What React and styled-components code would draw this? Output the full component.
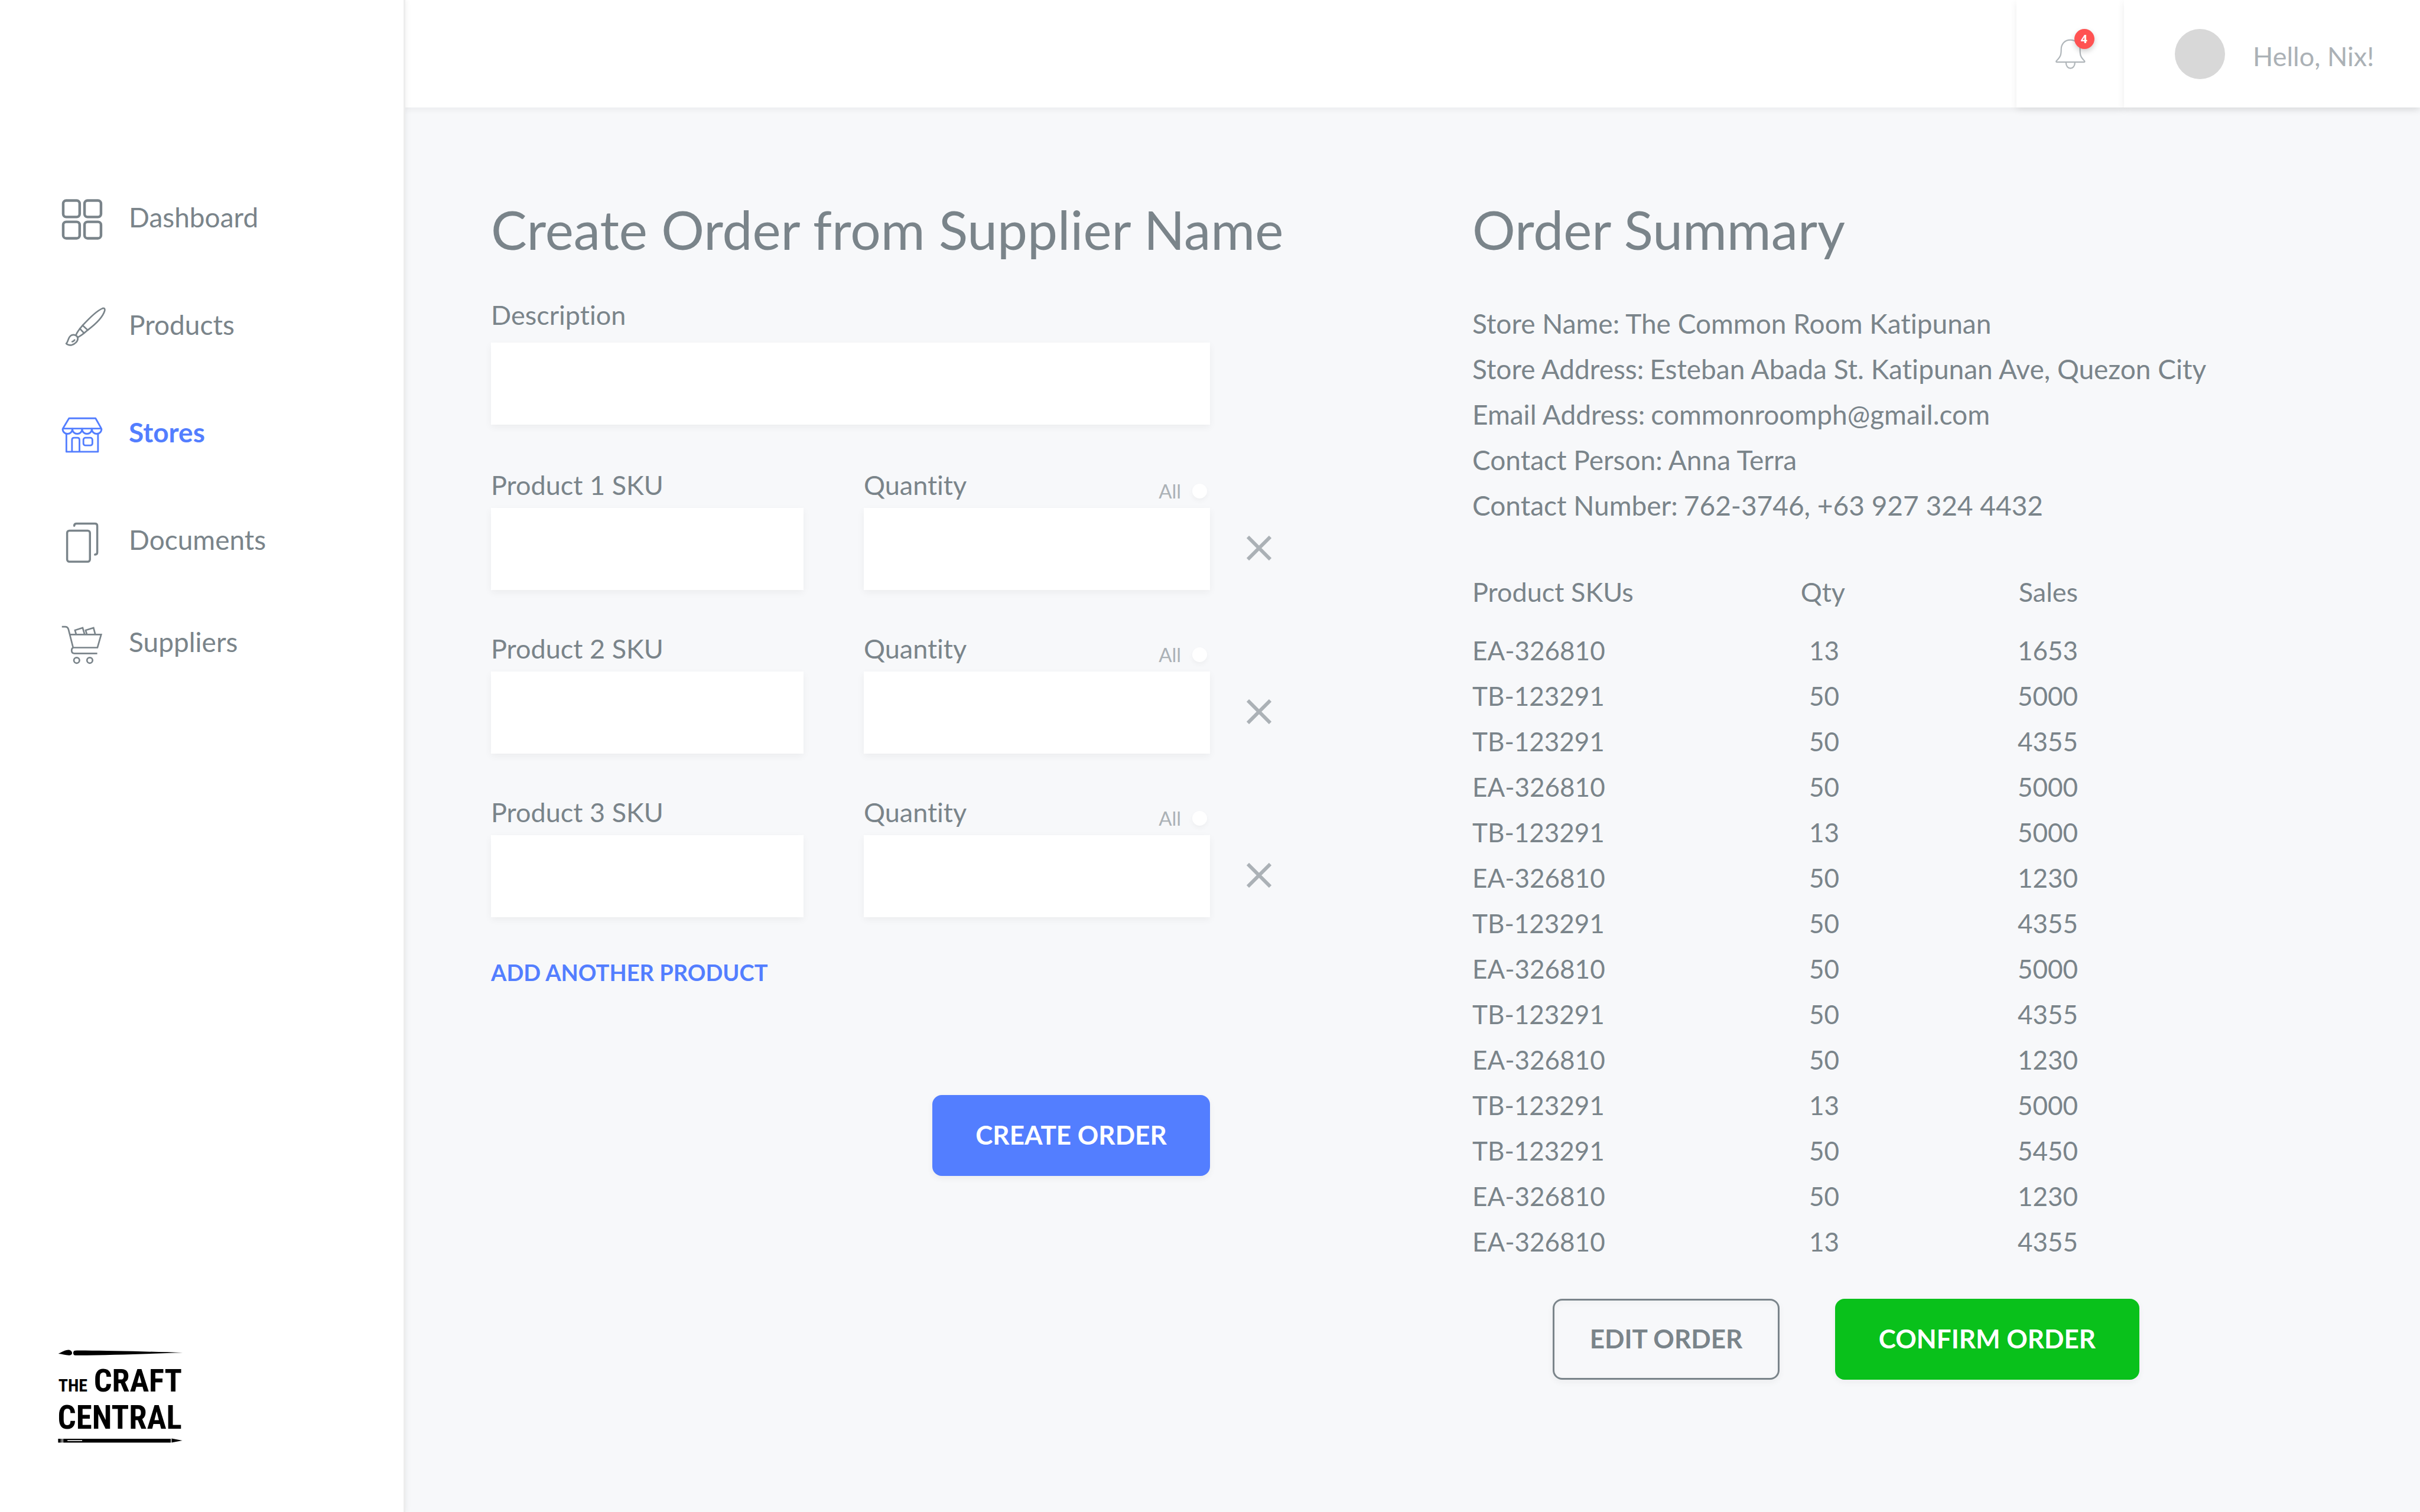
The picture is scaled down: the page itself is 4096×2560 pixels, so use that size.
import React, { useState } from "react";
import styled, { createGlobalStyle, css } from "styled-components";

const color = {
  text: "#7a848a",
  muted: "#abb1b6",
  blue: "#537eff",
  green: "#09c11b",
  red: "#ff5252",
  page: "#f7f8fa",
};

const GlobalStyle = createGlobalStyle`
  *, *::before, *::after { box-sizing: border-box; }
  body {
    margin: 0;
    background: ${color.page};
    color: ${color.text};
    font-family: Lato, "Open Sans", sans-serif;
    font-size: 45px;
    line-height: 54px;
    font-variant-ligatures: none;
  }
  button, input { font: inherit; color: inherit; }
`;

const Shell = styled.div`
  display: grid;
  grid-template-columns: 683px 1fr;
  min-height: 100vh;
`;

/* Sidebar */

const Sidebar = styled.aside`
  position: relative;
  z-index: 2;
  display: flex;
  flex-direction: column;
  justify-content: space-between;
  padding: 277px 0 109px;
  background: #fff;
  box-shadow: 3px 0 0 #ededed, 3px 0 10px rgba(0, 0, 0, 0.08);
`;

const NavList = styled.ul`
  margin: 0;
  padding: 0;
  list-style: none;
  font-size: 46px;
`;

const NavItem = styled.li`
  height: 182px;
  &:last-child {
    height: 164px;
  }
`;

const NavLink = styled.a`
  display: flex;
  align-items: center;
  gap: 42px;
  height: 100%;
  padding-left: 100px;
  color: ${(p) => (p.$active ? color.blue : color.text)};
  font-weight: ${(p) => (p.$active ? 700 : 400)};
  text-decoration: none;
`;

const NavGlyph = styled.svg`
  flex: none;
  width: 76px;
  height: 76px;
  overflow: visible;
  fill: none;
  stroke: currentColor;
  stroke-width: ${(p) => p.$stroke};
`;

const LogoLink = styled.a`
  display: block;
  width: 221px;
  margin-left: 93px;
  color: #000;
`;

const LogoArt = styled.svg`
  display: block;
  width: 221px;
  height: 171px;
  overflow: visible;
  fill: currentColor;
  font-family: "Liberation Sans Narrow", "Roboto Condensed", Roboto, sans-serif;
  font-weight: 700;
`;

/* Top bar */

const Content = styled.div`
  display: flex;
  flex-direction: column;
  min-width: 0;
`;

const TopBar = styled.header`
  display: flex;
  justify-content: flex-end;
  height: 182px;
  background: #fff;
  box-shadow: 0 4px 10px rgba(0, 0, 0, 0.05);
`;

const cell = css`
  display: flex;
  align-items: center;
  border: 0;
  background: #fff;
  box-shadow: 0 4px 12px rgba(0, 0, 0, 0.08);
`;

const BellButton = styled.button`
  ${cell}
  justify-content: center;
  width: 182px;
  padding: 0;
`;

const BellWrap = styled.span`
  position: relative;
  display: block;
  width: 51px;
  height: 51px;
`;

const BellArt = styled.svg`
  display: block;
  width: 51px;
  height: 51px;
  fill: none;
  stroke: #b0b6ba;
  stroke-width: 7;
`;

const Badge = styled.span`
  position: absolute;
  top: -17px;
  left: 32px;
  width: 34px;
  height: 34px;
  border-radius: 50%;
  background: ${color.red};
  box-shadow: 0 4px 10px rgba(0, 0, 0, 0.2);
  color: #fff;
  font: 700 19px/34px "Open Sans", sans-serif;
  text-align: center;
`;

const UserCell = styled.div`
  ${cell}
  position: relative;
  gap: 47px;
  width: 501px;
  padding-left: 86px;
  color: ${color.muted};
`;

const Avatar = styled.span`
  width: 85px;
  height: 85px;
  border-radius: 50%;
  background: #d8d8d8;
`;

const Greeting = styled.span`
  padding-top: 8px;
`;

/* Page */

const Main = styled.main`
  display: grid;
  grid-template-columns: 1661px 1fr;
  padding: 151px 0 100px 148px;
`;

const Title = styled.h1`
  margin: 0;
  font-size: 91px;
  font-weight: 400;
  line-height: 110px;
`;

const Form = styled.form`
  display: flex;
  flex-direction: column;
  width: 1217px;
  margin-top: 63px;
`;

const Field = styled.div`
  display: flex;
  flex-direction: column;
  gap: ${(p) => p.$gap || 12}px;
`;

const TextBox = styled.input`
  display: block;
  width: 100%;
  height: 139px;
  padding: 0 36px;
  border: 0;
  border-radius: 0;
  background: #fff;
  box-shadow: 0 4px 12px rgba(0, 0, 0, 0.05);
`;

const ProductRows = styled.div`
  display: grid;
  gap: 72px;
  margin: 75px 0 70px;
`;

const ProductRow = styled.div`
  display: grid;
  grid-template-columns: 529px 586px 42px;
  column-gap: 102px;
`;

const FieldHead = styled.div`
  display: flex;
  align-items: flex-end;
  justify-content: space-between;
`;

const AllOption = styled.label`
  display: flex;
  align-items: center;
  gap: 19px;
  padding-right: 5px;
  color: ${color.muted};
  font-size: 33px;
  line-height: 34px;
`;

const AllBox = styled.input`
  appearance: none;
  width: 25px;
  height: 25px;
  margin: 0;
  border-radius: 50%;
  background: #fff;
  box-shadow: 0 4px 8px rgba(0, 0, 0, 0.04);
  &:checked {
    background: ${color.blue};
  }
`;

const RemoveButton = styled.button`
  align-self: end;
  display: flex;
  align-items: center;
  width: 42px;
  height: 139px;
  margin-left: -40px;
  padding: 0 0 4px;
  border: 0;
  background: none;
  color: ${color.muted};
`;

const Cross = styled.svg`
  display: block;
  width: 42px;
  height: 42px;
  fill: none;
  stroke: currentColor;
  stroke-width: 6;
`;

const AddButton = styled.button`
  align-self: flex-start;
  padding: 0;
  border: 0;
  background: none;
  color: ${color.blue};
  font-size: 38px;
  font-weight: 700;
  line-height: 46px;
`;

const ActionButton = styled.button`
  width: ${(p) => p.$width}px;
  height: 137px;
  padding: 0 0 4px;
  border: 3px solid ${(p) => p.$fill || color.text};
  border-radius: 16px;
  background: ${(p) => p.$fill || "transparent"};
  box-shadow: 0 4px 12px rgba(0, 0, 0, 0.05)
    ${(p) => (p.$fill ? "" : ", inset 0 4px 12px rgba(0, 0, 0, 0.03)")};
  color: ${(p) => (p.$fill ? "#fff" : color.text)};
  font-size: 44px;
  font-weight: 700;
`;

const FormActions = styled.div`
  display: flex;
  justify-content: flex-end;
  margin-top: 185px;
`;

const Details = styled.dl`
  margin: 66px 0 70px;
  font-size: 46px;
  line-height: 77px;
`;

const DetailLine = styled.div`
  display: flex;
  gap: 10px;
  dt, dd { margin: 0; }
`;

const SkuTable = styled.table`
  width: 1025px;
  border-collapse: collapse;
  table-layout: fixed;
  font-size: 44px;
  line-height: 77px;
  th {
    padding: 0 0 22px;
    font-size: 45px;
    font-weight: 400;
    text-align: right;
  }
  td {
    padding: 0;
    text-align: right;
  }
  th:first-child,
  td:first-child {
    width: 397px;
    text-align: left;
  }
  th:nth-child(2) {
    width: 234px;
  }
  td:nth-child(2) {
    padding-right: 10px;
  }
`;

const SummaryActions = styled.div`
  display: flex;
  gap: 94px;
  margin: 58px 0 0 136px;
`;

/* Icons */

const DashboardIcon = () => (
  <NavGlyph viewBox="138 88 240 240" $stroke={14} aria-hidden="true">
    <rect x="160" y="118" width="88" height="88" rx="16" />
    <rect x="274" y="118" width="88" height="88" rx="16" />
    <rect x="160" y="232" width="88" height="88" rx="16" />
    <rect x="274" y="232" width="88" height="88" rx="16" />
  </NavGlyph>
);

const BrushIcon = () => (
  <NavGlyph viewBox="138 660 240 240" $stroke={8.5} strokeLinejoin="round" strokeLinecap="round" aria-hidden="true">
    <path d="M229 833C236 815 250 799 264 783C296 748 338 706 370 692Q385 688 382 704C373 735 335 775 291 808C273 824 258 838 239 846" />
    <path d="M264 783L291 808M249 800L271 824" />
    <path d="M176 880C190 868 183 847 205 835C220 829 237 838 238 852C239 868 222 884 205 888C194 890 183 887 176 880Z" />
    <path d="M208 870Q216 868 221 861" />
  </NavGlyph>
);

const StoreIcon = () => (
  <NavGlyph viewBox="138 1236 240 240" $stroke={9} strokeLinejoin="round" aria-hidden="true">
    <path d="M191 1281H333L364 1336H158Z" />
    <path d="M157 1337C157 1373 209 1373 209 1337C209 1373 261 1373 261 1337C261 1373 313 1373 313 1337C313 1373 365 1373 365 1337" />
    <path d="M177 1363V1460H346V1363" />
    <path d="M207 1460V1396Q207 1385 218 1385H236Q247 1385 247 1396V1460" />
    <rect x="268" y="1385" width="48" height="41" rx="11" />
  </NavGlyph>
);

const DocumentsIcon = () => (
  <NavGlyph viewBox="138 252 240 240" $stroke={11} strokeLinecap="round" aria-hidden="true">
    <rect x="181" y="323" width="122" height="166" rx="12" />
    <path d="M219 297Q219 285 231 285H330Q342 285 342 297V439Q342 450 330 451" />
  </NavGlyph>
);

const CartIcon = () => (
  <NavGlyph viewBox="138 800 240 240" $stroke={8.5} aria-hidden="true">
    <path d="M153 838H170Q184 838 188 852L213 950H343L363 880H196" />
    <path d="M213 950Q205 954 205 965Q205 981 220 981H342" />
    <path d="M229 878L223 857L264 844L274 878M286 878L280 857L322 844L331 878" />
    <circle cx="232" cy="1018" r="15" />
    <circle cx="302" cy="1018" r="15" />
  </NavGlyph>
);

const Bell = () => (
  <BellArt viewBox="270 119 163 163" aria-hidden="true">
    <path d="M350 124C320 124 301 146 301 175C301 205 298 215 275 238Q272 244 278 244H424Q430 244 427 238C404 215 403 205 403 175C403 146 380 124 350 124Z" />
    <path d="M327 247C327 288 375 288 375 247" />
  </BellArt>
);

const Logo = () => (
  <LogoArt viewBox="114 105 700 540" role="img" aria-label="The Craft Central">
    <path d="M132 142C152 132 170 121 190 122Q206 126 206 140Q204 150 190 151C170 150 152 143 132 142Z" />
    <path d="M216 127Q208 138 216 149Q222 152 240 151C420 150 640 141 799 137C640 131 420 126 240 125Q222 124 216 127Z" />
    <text x="132" y="344" fontSize="95">THE</text>
    <text x="322" y="344" fontSize="172">CRAFT</text>
    <text x="128" y="544" fontSize="174">CENTRAL</text>
    <path d="M131 598H146V619H131ZM149 598H154V619H149ZM158 598H735V619H158ZM739 597L797 608L739 619Z" />
    <path d="M181 608H260" stroke="#fff" strokeWidth="5" />
  </LogoArt>
);

/* Data */

const navItems = [
  { label: "Dashboard", Icon: DashboardIcon },
  { label: "Products", Icon: BrushIcon },
  { label: "Stores", Icon: StoreIcon, active: true },
  { label: "Documents", Icon: DocumentsIcon },
  { label: "Suppliers", Icon: CartIcon },
];

const details = [
  ["Store Name:", "The Common Room Katipunan"],
  ["Store Address:", "Esteban Abada St. Katipunan Ave, Quezon City"],
  ["Email Address:", "commonroomph@gmail.com"],
  ["Contact Person:", "Anna Terra"],
  ["Contact Number:", "762-3746, +63 927 324 4432"],
];

const orderLines = [
  ["EA-326810", 13, 1653],
  ["TB-123291", 50, 5000],
  ["TB-123291", 50, 4355],
  ["EA-326810", 50, 5000],
  ["TB-123291", 13, 5000],
  ["EA-326810", 50, 1230],
  ["TB-123291", 50, 4355],
  ["EA-326810", 50, 5000],
  ["TB-123291", 50, 4355],
  ["EA-326810", 50, 1230],
  ["TB-123291", 13, 5000],
  ["TB-123291", 50, 5450],
  ["EA-326810", 50, 1230],
  ["EA-326810", 13, 4355],
];

function ProductFields({ number, onRemove }) {
  return (
    <ProductRow>
      <Field>
        <label htmlFor={`sku-${number}`}>Product {number} SKU</label>
        <TextBox id={`sku-${number}`} />
      </Field>
      <Field>
        <FieldHead>
          <label htmlFor={`quantity-${number}`}>Quantity</label>
          <AllOption>
            All
            <AllBox type="checkbox" />
          </AllOption>
        </FieldHead>
        <TextBox id={`quantity-${number}`} inputMode="numeric" />
      </Field>
      <RemoveButton type="button" aria-label={`Remove product ${number}`} onClick={onRemove}>
        <Cross viewBox="0 0 42 42" aria-hidden="true">
          <path d="M2 2L40 40M40 2L2 40" />
        </Cross>
      </RemoveButton>
    </ProductRow>
  );
}

export default function App() {
  const [rows, setRows] = useState([1, 2, 3]);

  return (
    <>
      <GlobalStyle />
      <Shell>
        <Sidebar>
          <nav>
            <NavList>
              {navItems.map(({ label, Icon, active }) => (
                <NavItem key={label}>
                  <NavLink href="#" $active={active} aria-current={active ? "page" : undefined}>
                    <Icon />
                    {label}
                  </NavLink>
                </NavItem>
              ))}
            </NavList>
          </nav>
          <LogoLink href="#">
            <Logo />
          </LogoLink>
        </Sidebar>

        <Content>
          <TopBar>
            <BellButton type="button" aria-label="Notifications">
              <BellWrap>
                <Bell />
                <Badge>4</Badge>
              </BellWrap>
            </BellButton>
            <UserCell>
              <Avatar />
              <Greeting>Hello, Nix!</Greeting>
            </UserCell>
          </TopBar>

          <Main>
            <section>
              <Title>Create Order from Supplier Name</Title>
              <Form onSubmit={(e) => e.preventDefault()}>
                <Field $gap={20}>
                  <label htmlFor="description">Description</label>
                  <TextBox id="description" />
                </Field>
                <ProductRows>
                  {rows.map((n) => (
                    <ProductFields
                      key={n}
                      number={n}
                      onRemove={() => setRows(rows.filter((r) => r !== n))}
                    />
                  ))}
                </ProductRows>
                <AddButton
                  type="button"
                  onClick={() => setRows([...rows, Math.max(0, ...rows) + 1])}
                >
                  ADD ANOTHER PRODUCT
                </AddButton>
                <FormActions>
                  <ActionButton type="submit" $fill={color.blue} $width={470}>
                    CREATE ORDER
                  </ActionButton>
                </FormActions>
              </Form>
            </section>

            <section>
              <Title as="h2">Order Summary</Title>
              <Details>
                {details.map(([term, value]) => (
                  <DetailLine key={term}>
                    <dt>{term}</dt>
                    <dd>{value}</dd>
                  </DetailLine>
                ))}
              </Details>
              <SkuTable>
                <thead>
                  <tr>
                    <th scope="col">Product SKUs</th>
                    <th scope="col">Qty</th>
                    <th scope="col">Sales</th>
                  </tr>
                </thead>
                <tbody>
                  {orderLines.map(([sku, qty, sales], i) => (
                    <tr key={i}>
                      <td>{sku}</td>
                      <td>{qty}</td>
                      <td>{sales}</td>
                    </tr>
                  ))}
                </tbody>
              </SkuTable>
              <SummaryActions>
                <ActionButton type="button" $width={384}>
                  EDIT ORDER
                </ActionButton>
                <ActionButton type="button" $fill={color.green} $width={515}>
                  CONFIRM ORDER
                </ActionButton>
              </SummaryActions>
            </section>
          </Main>
        </Content>
      </Shell>
    </>
  );
}
